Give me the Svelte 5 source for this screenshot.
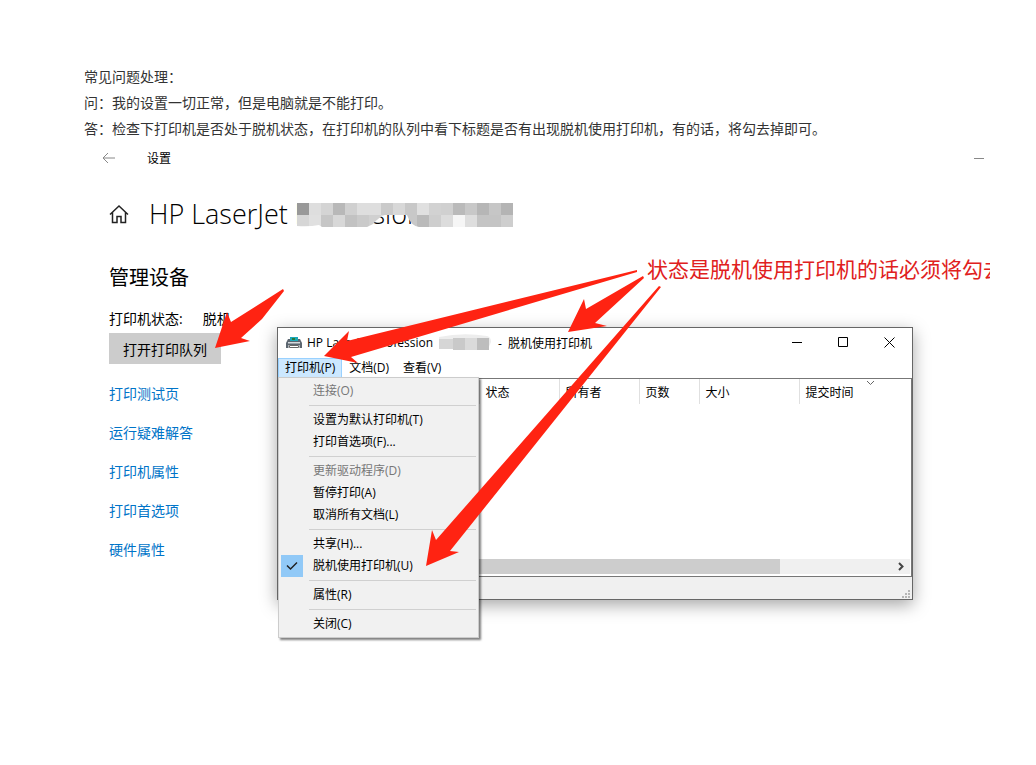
<script>
    const notes = [
        '常见问题处理：',
        '问：我的设置一切正常，但是电脑就是不能打印。',
        '答：检查下打印机是否处于脱机状态，在打印机的队列中看下标题是否有出现脱机使用打印机，有的话，将勾去掉即可。'
    ]

    const links = ['打印测试页', '运行疑难解答', '打印机属性', '打印首选项', '硬件属性']

    const columns = ['状态', '所有者', '页数', '大小', '提交时间']

    const groups = [
        [{ text: '连接(O)', disabled: true }],
        [{ text: '设置为默认打印机(T)' }, { text: '打印首选项(F)...' }],
        [{ text: '更新驱动程序(D)', disabled: true }, { text: '暂停打印(A)' }, { text: '取消所有文档(L)' }],
        [{ text: '共享(H)...' }, { text: '脱机使用打印机(U)', checked: true }],
        [{ text: '属性(R)' }],
        [{ text: '关闭(C)' }]
    ]

    // grey level of every mosaic block, row by row
    const mosaic = [
        [153, 222, 212, 184, 208, 222, 222, 202, 216, 200, 224, 210, 208, 186, 200, 182, 198, 180],
        [214, 224, 198, 216, 194, 202, 208, 222, 222, 200, 186, 206, 220, 246, 222, 196, 196, 206]
    ]

    // tip, barb, neck, tail, neck, barb
    const arrows = [
        '215,348 227,312 231,322 283,289 284,291 262,319 241,338 250,341',
        '324,356 349,331 347,341 637,270 637,272 351,357 358,363',
        '568,332 584,299 586,309 643,276 644,278 595,323 607,326',
        '426,566 432,530 436,540 659,286 661,287 450,551 459,552'
    ]
</script>

<main>
    {#each notes as note}
        <p class="note">{note}</p>
    {/each}

    <section class="shot">
        <header class="bar">
            <button class="plain back" aria-label="返回">
                <svg width="14" height="12" viewBox="0 0 14 12"><path d="M13 6H1M6 1L1 6l5 5" /></svg>
            </button>
            <span class="app">设置</span>
            <button class="plain min" aria-label="最小化">
                <svg width="10" height="11" viewBox="0 0 10 11"><path d="M0 5.5h10" /></svg>
            </button>
        </header>

        <div class="title">
            <svg class="home" width="20" height="20" viewBox="0 0 20 20">
                <path d="M1 10.5L10 2l9 8.500M3.500 8.500v10H8v-6h4v6h4.500v-10" />
            </svg>
            <h1>HP LaserJet <span class="model">Professional
                <svg class="mosaic" width="216" height="24" viewBox="0 0 216 24">
                    <clipPath id="blur">
                        <path d="M0 0h216v24H122q-8-1-12-12H88q-6 2-12 9l-6 3H25l-3-2q-10 2-22 1z" />
                    </clipPath>
                    <g clip-path="url(#blur)" shape-rendering="crispEdges">
                        {#each mosaic as row, y}
                            {#each row as level, x}
                                <rect x={x * 12} y={y * 12} width="12" height="12" fill="rgb({level},{level},{level})" />
                            {/each}
                        {/each}
                    </g>
                </svg>
            </span></h1>
        </div>

        <div class="settings">
            <h2>管理设备</h2>
            <p class="state"><span>打印机状态:</span><span>脱机</span></p>
            <button class="queue">打开打印队列</button>
            <nav>
                {#each links as link}
                    <a href="#top">{link}</a>
                {/each}
            </nav>
        </div>

        <div class="window">
            <div class="caption">
                <svg width="16" height="12" viewBox="0 0 16 12">
                    <path fill="#5c6670" d="M2 2h12l2 4v5h-2.500V8h-11v3H0V6z" />
                    <path fill="#1ba7b8" d="M4 0h8v4H4z" />
                    <path fill="#2c7a35" d="M6 1h3v2H6z" />
                    <path fill="#d5dade" d="M2 5h12v1.500H2z" />
                    <path fill="#fff" stroke="#666" d="M3.500 8.500h9v2h-9z" />
                </svg>
                <span class="name">HP LaserJet Profession</span>
                <svg class="patch" width="52" height="18" viewBox="0 0 52 18">
                    <path fill="#ededed" d="M0 3Q24-2 48 2q4 1 4 6l-3 7H0z" />
                    <path fill="#d6d6d6" d="M0 5h14v10H0z" />
                    <path fill="#c9c9c9" d="M14 4h12v12H14z" />
                    <path fill="#dadada" d="M26 4h12v12H26z" />
                    <path fill="#bdbdbd" d="M38 4h12v12H38z" />
                </svg>
                <span class="offline">-&nbsp; 脱机使用打印机</span>
                <div class="controls">
                    <button class="plain" aria-label="最小化"><svg width="11" height="11" viewBox="0 0 11 11"><path d="M0 5.500h10" /></svg></button>
                    <button class="plain" aria-label="最大化"><svg width="11" height="11" viewBox="0 0 11 11"><path d="M.5.5h9v9h-9z" /></svg></button>
                    <button class="plain" aria-label="关闭"><svg width="11" height="11" viewBox="0 0 11 11"><path d="M.5.5l10 10M10.500.5l-10 10" /></svg></button>
                </div>
            </div>

            <div class="menubar">
                <button class="open">打印机(P)</button>
                <button>文档(D)</button>
                <button>查看(V)</button>
            </div>

            <div class="list">
                <table>
                    <thead>
                        <tr>
                            <td></td>
                            {#each columns as column}
                                <th>{column}</th>
                            {/each}
                        </tr>
                    </thead>
                </table>
                <svg class="sort" width="9" height="6" viewBox="0 0 9 6"><path d="M1 1l3.500 3.500L8 1" /></svg>
                <div class="scroll">
                    <div class="thumb"></div>
                    <svg width="8" height="9" viewBox="0 0 8 9"><path d="M2 1l3.500 3.500L2 8" /></svg>
                </div>
            </div>

            <div class="status">
                <svg width="9" height="9" viewBox="0 0 9 9">
                    <path d="M6 0h2v2H6zM3 3h2v2H3zM6 3h2v2H6zM0 6h2v2H0zM3 6h2v2H3zM6 6h2v2H6z" />
                </svg>
            </div>

            <div class="menu">
                {#each groups as group}
                    <div class="group">
                        {#each group as item}
                            <button disabled={item.disabled}>
                                <span class="mark" class:checked={item.checked}>
                                    {#if item.checked}
                                        <svg width="12" height="10" viewBox="0 0 12 10"><path d="M1 4.500L4.500 8 11 1.500" /></svg>
                                    {/if}
                                </span>
                                {item.text}
                            </button>
                        {/each}
                    </div>
                {/each}
            </div>
        </div>

        <p class="remark">状态是脱机使用打印机的话必须将勾去</p>
        <svg class="arrows" width="906" height="500" viewBox="84 142 906 500">
            {#each arrows as points}
                <polygon {points} />
            {/each}
        </svg>
    </section>
</main>

<style>
    :global(body) {
        margin: 0;
        background: #fff;
    }

    main {
        padding: 64px 46px 0 84px;
        font-family: "Open Sans", "Noto Sans CJK SC", sans-serif;
        font-size: 14px;
        color: #000;
    }

    h1, h2, p {
        margin: 0;
        font-weight: 400;
    }

    button {
        font: inherit;
        color: inherit;
        border: 0;
        padding: 0;
        background: none;
    }

    svg {
        display: block;
        flex: none;
    }

    .plain {
        display: flex;
        align-items: center;
        justify-content: center;
    }

    .plain svg {
        fill: none;
        stroke: #000;
    }

    .note {
        line-height: 26px;
        color: #333;
    }

    .shot {
        position: relative;
        min-height: 500px;
        overflow: hidden;
    }

    .bar {
        display: flex;
        align-items: center;
        height: 32px;
        padding: 0 6px 0 18px;
        font-size: 12px;
    }

    .bar .plain svg {
        stroke: #888;
    }

    .app {
        flex: 1;
        margin-left: 31px;
    }

    .title {
        display: flex;
        align-items: center;
        height: 80px;
        padding-left: 25px;
    }

    .home {
        fill: none;
        stroke: #222;
        stroke-width: 1.5;
    }

    h1 {
        margin-left: 20px;
        font-size: 27px;
        font-weight: 300;
        line-height: 36px;
        white-space: nowrap;
    }

    .model {
        position: relative;
    }

    .mosaic {
        position: absolute;
        top: 8px;
        left: 2px;
    }

    .settings {
        padding-left: 25px;
    }

    h2 {
        font-size: 20px;
        line-height: 48px;
    }

    .state {
        display: flex;
        gap: 20px;
        line-height: 28px;
        padding-top: 3px;
    }

    .queue {
        display: block;
        width: 112px;
        height: 31px;
        background: #ccc;
    }

    nav {
        display: flex;
        flex-direction: column;
        align-items: flex-start;
        padding-top: 10px;
    }

    a {
        line-height: 39px;
        color: #0074c8;
        text-decoration: none;
    }

    .window {
        position: absolute;
        top: 185px;
        left: 193px;
        right: 77px;
        border: 1px solid #666;
        background: #fff;
        font-size: 12px;
        box-shadow: 0 5px 16px rgba(0, 0, 0, 0.35);
    }

    .caption {
        display: flex;
        align-items: center;
        height: 29px;
        padding-left: 8px;
        white-space: nowrap;
    }

    .name {
        margin-left: 5px;
        width: 132px;
    }

    .offline {
        margin-left: 7px;
    }

    .controls {
        display: flex;
        margin-left: auto;
    }

    .controls .plain {
        width: 46px;
        height: 29px;
    }

    .menubar {
        display: flex;
        height: 20px;
        padding-top: 1px;
    }

    .menubar button {
        padding: 0 7px;
        line-height: 18px;
    }

    .menubar .open {
        background: #cce8ff;
        box-shadow: inset 0 0 0 1px #99d1ff;
    }

    .list {
        position: relative;
        display: flex;
        flex-direction: column;
        height: 197px;
        border: 1px solid #777;
        border-left: 0;
    }

    table {
        width: 100%;
        table-layout: fixed;
        border-collapse: collapse;
    }

    th, td {
        width: 80px;
        height: 25px;
        box-sizing: border-box;
        padding: 0 0 0 6px;
        border-right: 1px solid #e0e0e0;
        font-weight: 400;
        text-align: left;
    }

    td {
        width: 201px;
    }

    th:nth-child(4) {
        width: 60px;
    }

    th:nth-child(5) {
        width: 100px;
    }

    th:last-child {
        width: auto;
        border: 0;
    }

    .sort {
        position: absolute;
        top: 1px;
        right: 36px;
        fill: none;
        stroke: #666;
    }

    .scroll {
        display: flex;
        align-items: center;
        justify-content: space-between;
        height: 15px;
        margin: auto 1px 2px 0;
        padding-right: 5px;
        background: #f0f0f0;
    }

    .scroll svg {
        fill: none;
        stroke: #444;
        stroke-width: 2;
    }

    .thumb {
        width: 80%;
        height: 15px;
        background: #cdcdcd;
    }

    .status {
        display: flex;
        align-items: flex-end;
        justify-content: flex-end;
        height: 22px;
        padding-right: 1px;
        background: #f0f0f0;
    }

    .status svg {
        fill: #b5b5b5;
    }

    .menu {
        position: absolute;
        top: 49px;
        left: 0;
        width: 201px;
        box-sizing: border-box;
        padding: 2px;
        border: 1px solid #ccc;
        background: #f1f1f1;
        box-shadow: 2px 2px 2px rgba(0, 0, 0, 0.5);
    }

    .group + .group::before {
        content: "";
        display: block;
        height: 1px;
        margin: 3px 0 3px 28px;
        background: #d0d0d0;
    }

    .menu button {
        display: flex;
        align-items: center;
        width: 100%;
        height: 22px;
        line-height: 20px;
    }

    .menu button:disabled {
        color: #777;
    }

    .mark {
        display: flex;
        align-items: center;
        justify-content: center;
        width: 22px;
        height: 22px;
        margin-right: 10px;
    }

    .checked {
        background: #91c9f7;
    }

    .mark svg {
        fill: none;
        stroke: #222;
        stroke-width: 1.5;
    }

    .remark {
        position: absolute;
        top: 111px;
        left: 563px;
        right: 0;
        overflow: hidden;
        font-size: 21px;
        line-height: 32px;
        white-space: nowrap;
        color: #e02020;
    }

    .arrows {
        position: absolute;
        top: 0;
        left: 0;
        fill: #ff2312;
        pointer-events: none;
    }
</style>
